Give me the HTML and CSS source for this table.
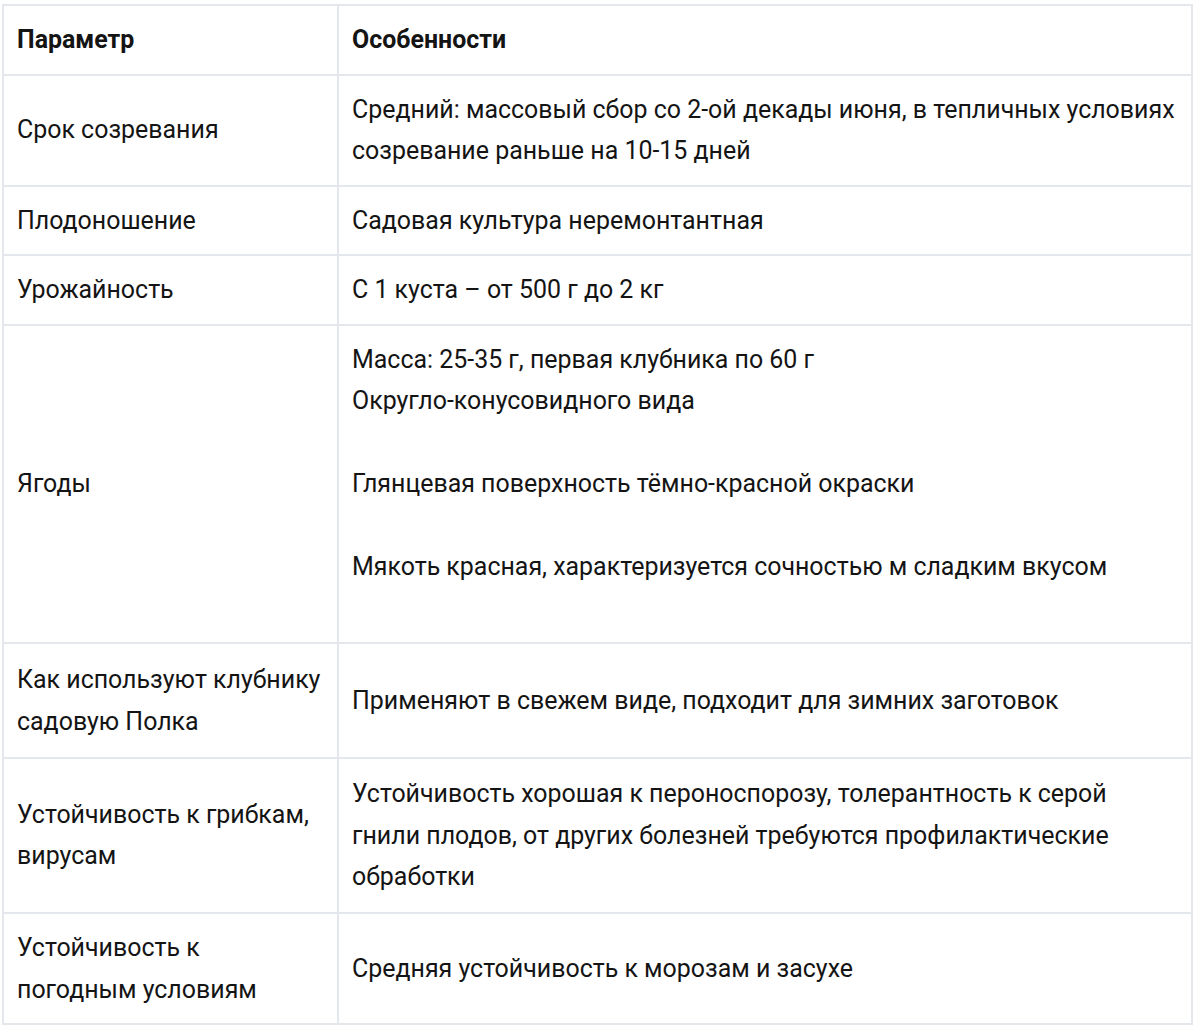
FILE: index.html
```html
<!DOCTYPE html>
<html lang="ru">
<head>
<meta charset="utf-8">
<title>Клубника Полка</title>
<link rel="stylesheet" href="styles.css">
</head>
<body>
<table class="specs">
  <colgroup>
    <col class="col-param">
    <col class="col-feat">
  </colgroup>
  <thead>
    <tr>
      <th>Параметр</th>
      <th>Особенности</th>
    </tr>
  </thead>
  <tbody>
    <tr>
      <td>Срок созревания</td>
      <td>Средний: массовый сбор со 2-ой декады июня, в тепличных условиях созревание раньше на 10-15 дней</td>
    </tr>
    <tr>
      <td>Плодоношение</td>
      <td>Садовая культура неремонтантная</td>
    </tr>
    <tr>
      <td>Урожайность</td>
      <td>С 1 куста – от 500 г до 2 кг</td>
    </tr>
    <tr>
      <td>Ягоды</td>
      <td>
        <p class="para">Масса: 25-35 г, первая клубника по 60 г<br>Округло-конусовидного вида</p>
        <p class="para">Глянцевая поверхность тёмно-красной окраски</p>
        <p class="para">Мякоть красная, характеризуется сочностью м сладким вкусом</p>
      </td>
    </tr>
    <tr class="row-use">
      <td>Как используют клубнику садовую Полка</td>
      <td>Применяют в свежем виде, подходит для зимних заготовок</td>
    </tr>
    <tr class="row-resist">
      <td>Устойчивость к грибкам, вирусам</td>
      <td>Устойчивость хорошая к пероноспорозу, толерантность к серой гнили плодов, от других болезней требуются профилактические обработки</td>
    </tr>
    <tr>
      <td>Устойчивость к погодным условиям</td>
      <td>Средняя устойчивость к морозам и засухе</td>
    </tr>
  </tbody>
</table>
</body>
</html>
```

FILE: styles.css
```css
html, body {
  margin: 0;
  padding: 0;
  background: #ffffff;
}

body {
  padding: 4px 0 0 2px;
  font-family: Roboto, "Noto Sans", Arial, sans-serif;
  font-size: 24.95px;
  line-height: 41.5px;
  color: #141414;
}

.specs {
  border-collapse: collapse;
  width: 1191px;
  table-layout: fixed;
}

.col-param {
  width: 335px;
}

.specs th,
.specs td {
  border: 2px solid #e4e7eb;
  padding: 13px 13px 13px 13px;
  vertical-align: middle;
  text-align: left;
}

.specs th {
  font-weight: 700;
}

.specs td {
  font-weight: 400;
}

.specs .row-use td {
  padding-top: 15px;
  padding-bottom: 15px;
}

.specs .row-resist td {
  padding-top: 14px;
  padding-bottom: 14.5px;
}

.para {
  margin: 0 0 41.5px 0;
}
```
